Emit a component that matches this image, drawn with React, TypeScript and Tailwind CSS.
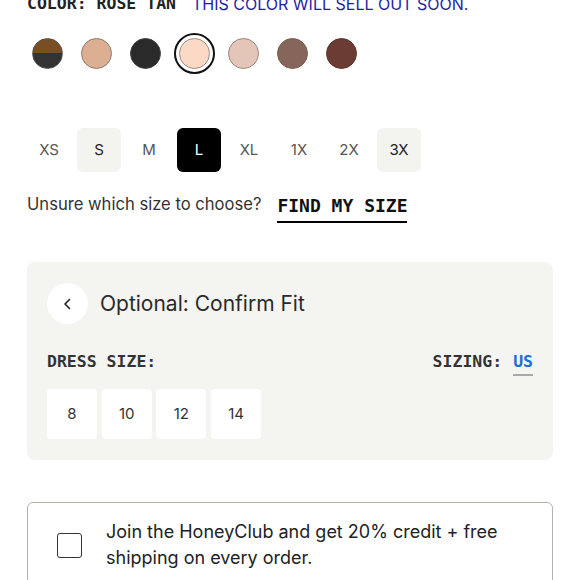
import React from "react";

const mono = { fontFamily: '"DejaVu Sans Mono", "Liberation Mono", monospace' };
const sans = { fontFamily: 'Inter, "Noto Sans", Arial, sans-serif' };

const swatches = [
  { bg: "linear-gradient(#7a4e25 0 50%, #333333 50% 100%)", border: "#555" },
  { bg: "#dcae92", border: "#8e7c72" },
  { bg: "#2a2a2a", border: "#444" },
  { bg: "#fbd9c4", border: "#9a8d88", selected: true },
  { bg: "#e4c6b8", border: "#968880" },
  { bg: "#86655a", border: "#7a5d53" },
  { bg: "#6b3c34", border: "#5e342d" },
];

const sizes = [
  { l: "XS", s: "plain" },
  { l: "S", s: "soft" },
  { l: "M", s: "plain" },
  { l: "L", s: "sel" },
  { l: "XL", s: "plain" },
  { l: "1X", s: "plain" },
  { l: "2X", s: "plain" },
  { l: "3X", s: "soft" },
];

export default function App() {
  return (
    <div className="w-[580px] h-[580px] overflow-hidden bg-white px-[27px]" style={sans}>
      <div className="mt-[-6px] flex items-center gap-[16px] h-[20px] leading-[20px]">
        <span className="text-[16.5px] font-bold text-[#222]" style={mono}>COLOR: ROSE TAN</span>
        <span className="text-[16px] text-[#1f1fa3]">THIS COLOR WILL SELL OUT SOON.</span>
      </div>

      <div className="mt-[24px] flex items-center gap-[18px] pl-[5px]">
        {swatches.map((s, i) => (
          <div
            key={i}
            className={
              "w-[31px] h-[31px] rounded-full border " +
              (s.selected ? "outline-2 outline-[#111] outline-offset-[3px]" : "")
            }
            style={{ background: s.bg, borderColor: s.border }}
          />
        ))}
      </div>

      <div className="mt-[59px] flex gap-[6px]">
        {sizes.map((s) => (
          <div
            key={s.l}
            className={
              "w-[44px] h-[44px] rounded-[6px] flex items-center justify-center text-[15px] " +
              (s.s === "sel"
                ? "bg-black text-white"
                : s.s === "soft"
                ? "bg-[#f3f3ef] text-[#222]"
                : "text-[#555]")
            }
          >
            {s.l}
          </div>
        ))}
      </div>

      <div className="mt-[20px] flex items-center h-[24px]">
        <span className="text-[16.6px] text-[#333] mt-[1px]">Unsure which size to choose?</span>
        <span
          className="ml-[16px] text-[18px] font-bold text-[#111] border-b-2 border-black leading-[22px] pt-[2px] mt-[8px] pb-[4px]"
          style={mono}
        >
          FIND MY SIZE
        </span>
      </div>

      <div className="mt-[46px] bg-[#f4f4f0] rounded-[8px] px-[20px] pt-[21px] pb-[21px]">
        <div className="flex items-center gap-[12px]">
          <div className="w-[41px] h-[41px] rounded-full bg-white flex items-center justify-center">
            <svg width="14" height="14" viewBox="0 0 14 14" fill="none">
              <path d="M8.5 2.5 L4 7 L8.5 11.5" stroke="#222" strokeWidth="1.6" strokeLinecap="round" strokeLinejoin="round" />
            </svg>
          </div>
          <span className="text-[21px] text-[#2a2a2a]">Optional: Confirm Fit</span>
        </div>

        <div className="mt-[28px] flex items-start justify-between h-[24px]">
          <span className="text-[16.5px] leading-[20px] font-bold text-[#333]" style={mono}>DRESS SIZE:</span>
          <span className="text-[16.5px] leading-[20px] font-bold text-[#333]" style={mono}>
            SIZING:
            <span className="ml-[11px] inline-block text-[#1d6fd6] border-b-2 border-[#a9a9a9] pb-[2px] leading-[20px]">US</span>
          </span>
        </div>

        <div className="mt-[13px] flex gap-[4.7px]">
          {["8", "10", "12", "14"].map((n) => (
            <div key={n} className="w-[50px] h-[50px] bg-white rounded-[4px] flex items-center justify-center text-[15px] text-[#333]">
              {n}
            </div>
          ))}
        </div>
      </div>

      <div className="mt-[42px] border border-[#b9afad] rounded-[6px] h-[120px] flex items-start pt-[16px]">
        <div className="ml-[29px] mt-[14px] w-[25px] h-[25px] rounded-[3px] border-[1.5px] border-[#333] shrink-0" />
        <div className="ml-[24px] text-[18px] leading-[26px] text-[#222] pr-[20px]">
          Join the HoneyClub and get 20% credit + free shipping on every order.
        </div>
      </div>
    </div>
  );
}
